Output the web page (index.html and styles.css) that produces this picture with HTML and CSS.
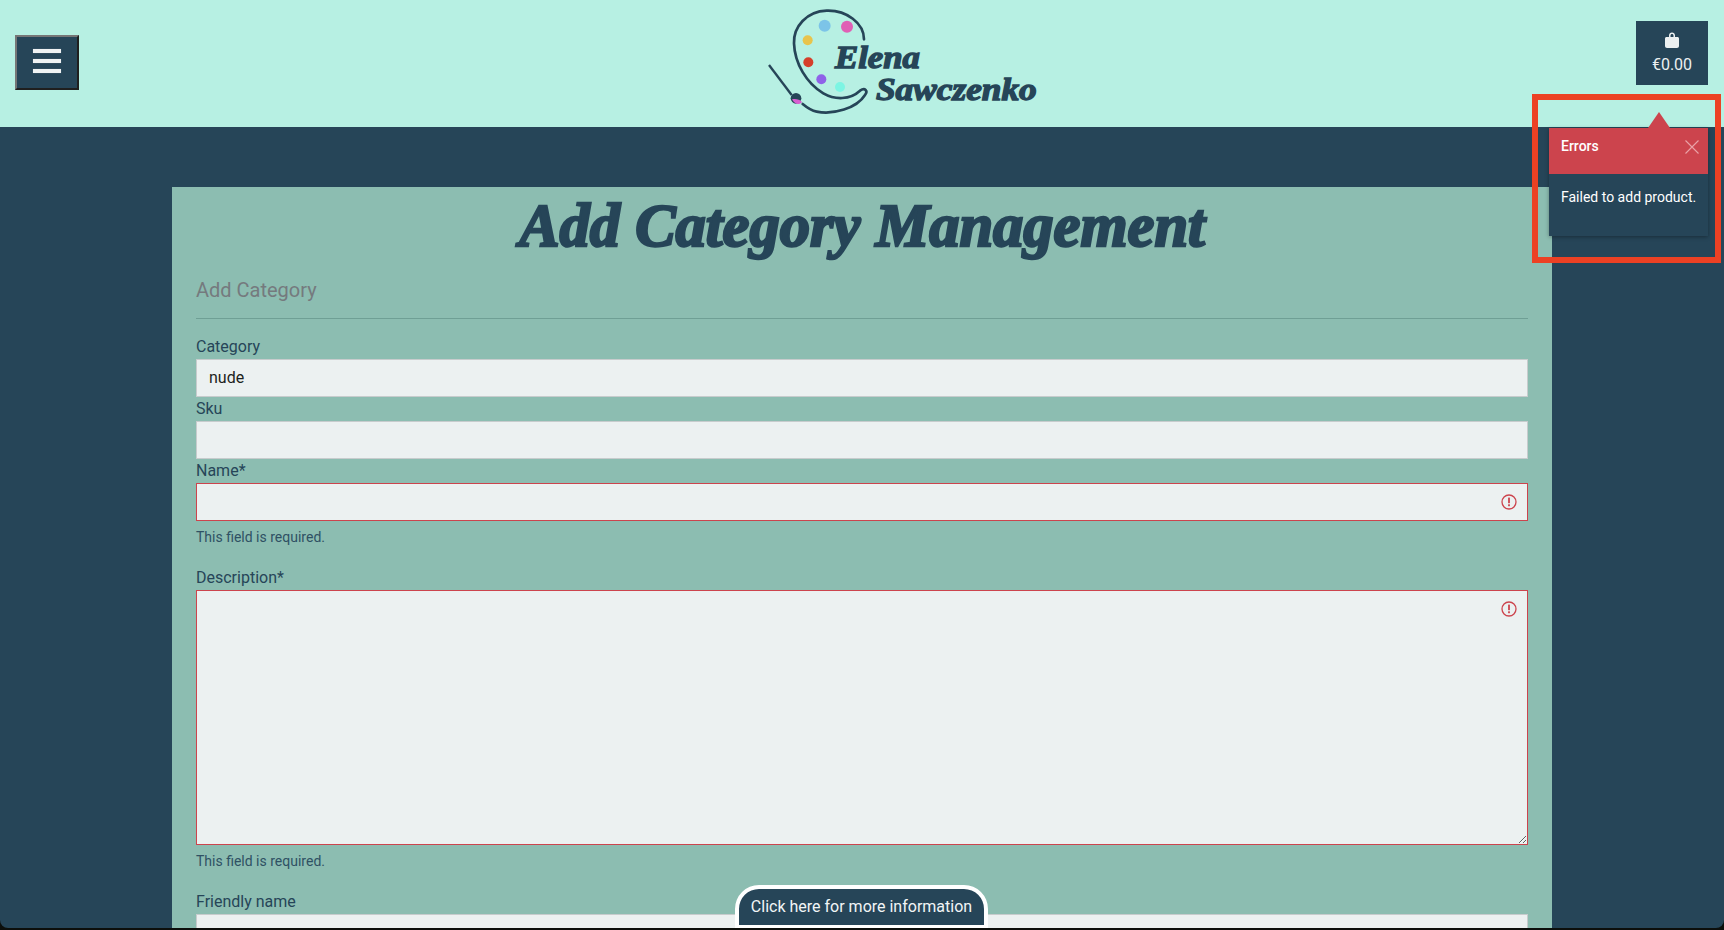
FILE: index.html
```html
<!DOCTYPE html>
<html lang="en">
<head>
<meta charset="utf-8">
<title>Add Category Management</title>
<link rel="stylesheet" href="styles.css">
</head>
<body>
<div class="window">
  <header class="site-header">
    <button class="menu-btn" type="button" aria-label="Menu"><span></span><span></span><span></span></button>
    <svg class="logo" width="405" height="125" viewBox="-255 0 1215 375" aria-label="Elena Sawczenko">
      <path class="logo-stroke" d="M372 118C372 70 320 30 260 32C200 34 160 80 162 130C164 190 200 250 250 280C285 300 330 300 360 272C375 262 385 272 375 285C350 325 280 345 230 335C215 332 200 322 188 312"/>
      <path class="logo-handle" d="M87 195L155 285"/>
      <circle cx="168" cy="295" r="16" fill="#264558"/>
      <path d="M156 298C168 296 178 298 186 306C178 316 164 314 156 298Z" fill="#d85fd0"/>
      <circle cx="254" cy="77" r="18" fill="#7cc4e8"/>
      <circle cx="321" cy="80" r="18" fill="#e05fb5"/>
      <circle cx="203" cy="121" r="15" fill="#e8c44c"/>
      <circle cx="205" cy="187" r="15" fill="#d53f2a"/>
      <circle cx="244" cy="238" r="15" fill="#8f62e8"/>
      <circle cx="300" cy="261" r="15" fill="#7df5e3"/>
      <text class="logo-text" x="285" y="205" textLength="255" lengthAdjust="spacingAndGlyphs">Elena</text>
      <text class="logo-text" x="408" y="300" textLength="482" lengthAdjust="spacingAndGlyphs">Sawczenko</text>
    </svg>
    <a class="cart" href="#">
      <svg class="bag" width="14" height="16" viewBox="0 0 14 16"><path d="M4 5V3.600C4 1.800 5.300 .6 7 .6S10 1.800 10 3.600V5H12.500C13.300 5 14 5.700 14 6.500V14C14 15.100 13.100 16 12 16H2C.9 16 0 15.100 0 14V6.500C0 5.700 .7 5 1.500 5ZM5.500 5H8.500V3.600C8.500 2.700 7.900 2 7 2S5.500 2.700 5.500 3.600Z" fill-rule="evenodd"/></svg>
      <span>€0.00</span>
    </a>
  </header>

  <main class="page">
    <section class="panel">
      <h1 class="title">Add Category Management</h1>
      <h2 class="subtitle">Add Category</h2>
      <form class="form">
        <div class="field">
          <label class="label" for="category">Category</label>
          <input class="control" id="category" type="text" value="nude">
        </div>
        <div class="field">
          <label class="label" for="sku">Sku</label>
          <input class="control" id="sku" type="text">
        </div>
        <div class="field">
          <label class="label" for="name">Name*</label>
          <div class="control-wrap">
            <input class="control invalid" id="name" type="text">
            <svg class="alert" width="16" height="16" viewBox="0 0 16 16"><circle cx="8" cy="8" r="7" fill="none" stroke="currentColor" stroke-width="1.300"/><rect x="7.100" y="3.600" width="1.800" height="5.600" fill="currentColor"/><rect x="7.100" y="10.300" width="1.800" height="1.900" fill="currentColor"/></svg>
          </div>
          <p class="help">This field is required.</p>
        </div>
        <div class="field">
          <label class="label" for="description">Description*</label>
          <div class="control-wrap">
            <textarea class="control invalid area" id="description"></textarea>
            <svg class="alert" width="16" height="16" viewBox="0 0 16 16"><circle cx="8" cy="8" r="7" fill="none" stroke="currentColor" stroke-width="1.300"/><rect x="7.100" y="3.600" width="1.800" height="5.600" fill="currentColor"/><rect x="7.100" y="10.300" width="1.800" height="1.900" fill="currentColor"/></svg>
          </div>
          <p class="help">This field is required.</p>
        </div>
        <div class="field">
          <label class="label" for="friendly">Friendly name</label>
          <input class="control" id="friendly" type="text">
        </div>
      </form>
    </section>
  </main>

  <div class="toast">
    <div class="toast-head">
      <span class="toast-title">Errors</span>
      <svg class="toast-close" width="14" height="14" viewBox="0 0 14 14"><path d="M.5 .5L13.500 13.500M13.500 .5L.5 13.500" stroke="#e9a3a8" stroke-width="1.100" fill="none"/></svg>
    </div>
    <div class="toast-body">Failed to add product.</div>
  </div>
  <div class="highlight"></div>
  <a class="info-tab" href="#">Click here for more information</a>
</div>
</body>
</html>
```

FILE: styles.css
```css
* {
  box-sizing: border-box;
}

html,
body {
  margin: 0;
  height: 100%;
  overflow: hidden;
  background: #0c0f0c;
}

body {
  font-family: Roboto, "Liberation Sans", sans-serif;
  font-size: 16px;
  color: #264558;
}

.window {
  position: relative;
  height: 928px;
  overflow: hidden;
  background: #264558;
  border-radius: 0 0 8px 8px;
}

.site-header {
  display: flex;
  justify-content: space-between;
  align-items: flex-start;
  height: 127px;
  padding: 0 16px 0 15px;
  background: #b7f0e3;
}

.menu-btn {
  display: flex;
  flex-direction: column;
  align-items: center;
  gap: 6px;
  width: 64px;
  height: 55px;
  margin-top: 35px;
  padding: 12px 0 0;
  background: #264558;
  border: 2px solid;
  border-color: #767676 #1f1f1f #1f1f1f #767676;
}

.menu-btn span {
  display: block;
  width: 28px;
  height: 4px;
  background: #f0f3f4;
  box-shadow: 0 0 1px rgba(240, 243, 244, .6);
}

.logo {
  display: block;
  flex: none;
}

.logo-stroke {
  fill: none;
  stroke: #264558;
  stroke-width: 8;
  stroke-linecap: round;
}

.logo-handle {
  fill: none;
  stroke: #264558;
  stroke-width: 7;
}

.logo-text {
  font-family: "Liberation Serif", serif;
  font-size: 92px;
  font-weight: 700;
  font-style: italic;
  fill: #264558;
  stroke: #264558;
  stroke-width: 4;
}

.cart {
  display: flex;
  flex-direction: column;
  align-items: center;
  gap: 7px;
  width: 72px;
  height: 64px;
  margin-top: 21px;
  padding-top: 11px;
  background: #264558;
  color: #ecf0f1;
  text-decoration: none;
  line-height: 20px;
}

.bag {
  display: block;
  fill: #ecf0f1;
}

.page {
  padding-top: 60px;
}

.panel {
  width: 1380px;
  min-height: 900px;
  margin: 0 auto;
  padding: 0 24px;
  background: #8cbdb1;
}

.title {
  margin: 0;
  height: 72px;
  font-family: "Liberation Serif", serif;
  font-size: 60.500px;
  font-weight: 700;
  font-style: italic;
  line-height: 78px;
  text-align: center;
  -webkit-text-stroke: 2.500px #264558;
}

.subtitle {
  margin: 16px 0;
  padding-bottom: 13px;
  border-bottom: 1px solid #6f9f95;
  font-size: 20px;
  font-weight: 400;
  line-height: 30px;
  color: #757a7e;
}

.label {
  display: block;
  height: 24px;
  line-height: 24px;
}

.control-wrap {
  position: relative;
}

.control {
  display: block;
  width: 100%;
  height: 38px;
  margin: 0;
  padding: 0 12px 2px;
  background: #ecf1f1;
  border: 1px solid #c7cccd;
  border-radius: 0;
  font: 16px Roboto, "Liberation Sans", sans-serif;
  color: #1d1f20;
}

.invalid {
  border-color: #cc444d;
}

.area {
  height: 255px;
  padding: 8px 12px;
}

.alert {
  position: absolute;
  top: 11px;
  right: 11px;
  color: #cc444d;
}

.help {
  margin: 6px 0 18px;
  font-size: 14px;
  line-height: 21px;
  color: #2f5164;
}

.toast {
  position: absolute;
  top: 128px;
  right: 16px;
  width: 159px;
  height: 108px;
  background: #264558;
  color: #fff;
  font-size: 14px;
  box-shadow: 0 1px 4px rgba(0, 0, 0, .35);
}

.toast::before {
  content: "";
  position: absolute;
  top: -16px;
  left: 99px;
  border-style: solid;
  border-width: 0 11px 16px;
  border-color: transparent transparent #cc444d;
}

.toast-head {
  display: flex;
  align-items: flex-start;
  justify-content: space-between;
  height: 46px;
  padding: 8px 9px 0 12px;
  background: #cc444d;
  line-height: 20px;
}

.toast-title {
  font-weight: 500;
}

.toast-close {
  margin-top: 4px;
}

.toast-body {
  padding: 13px 0 0 12px;
  line-height: 20px;
  white-space: nowrap;
}

.highlight {
  position: absolute;
  top: 94px;
  left: 1532px;
  width: 189px;
  height: 169px;
  border: 6px solid #ec4124;
}

.info-tab {
  position: absolute;
  left: 735px;
  bottom: 0;
  width: 253px;
  height: 43px;
  padding-top: 7px;
  background: #264558;
  border: 4px solid #fff;
  border-bottom-width: 3px;
  border-radius: 24px 24px 0 0;
  color: #f2f5f6;
  font-size: 16px;
  line-height: 22px;
  text-align: center;
  text-decoration: none;
}
```
